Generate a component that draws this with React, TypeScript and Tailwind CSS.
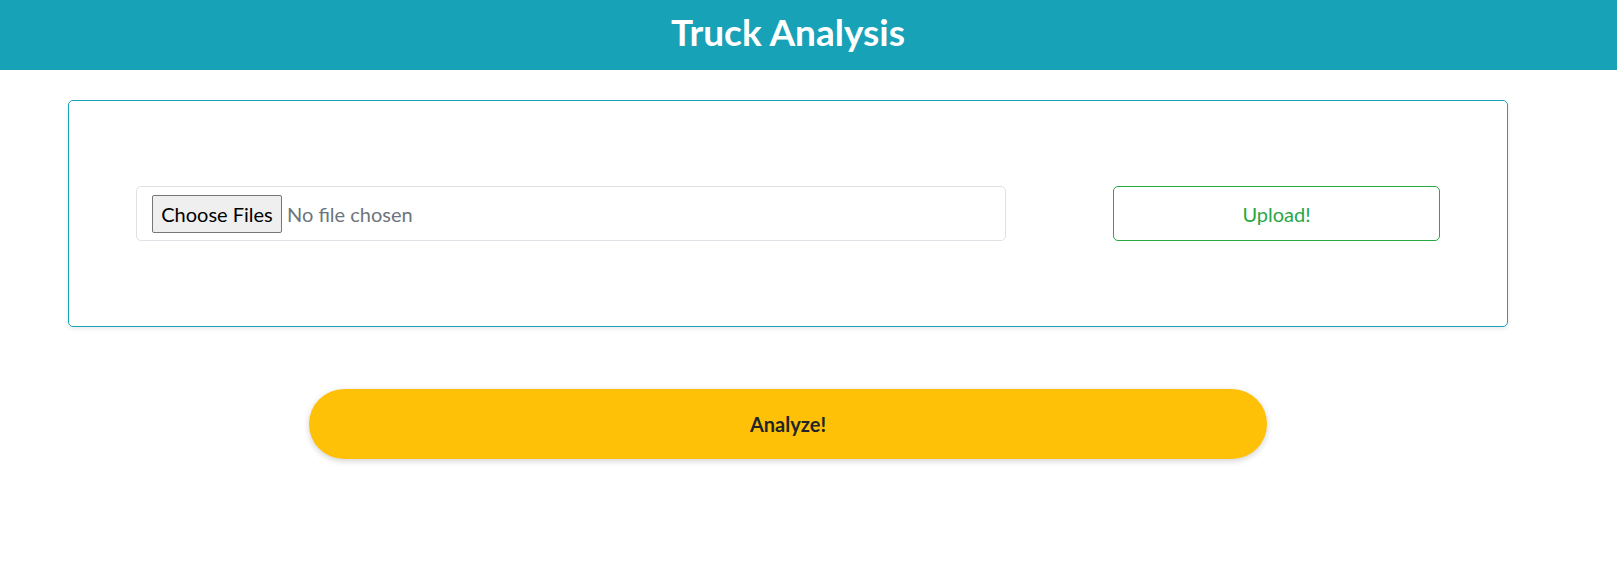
export default function App() {
  return (
    <div className="min-h-screen bg-white font-['Lato','Open_Sans',sans-serif] text-[#212529]">
      <header className="h-[70px] w-full bg-[#17a2b8]">
        <div className="flex h-full w-[1576px] items-center justify-center pb-[7px]">
          <h1 className="text-[37px] font-bold leading-none text-white">Truck Analysis</h1>
        </div>
      </header>

      <main className="w-[1576px] px-[68px] pt-[30px]">
        <div className="rounded-[5px] border border-[#17a2b8] px-[67px] py-[85px] shadow-[0_2px_4px_rgba(0,0,0,0.08)]">
          <div className="flex items-center justify-between">
            <label className="flex h-[55px] w-[870px] cursor-pointer items-center rounded-[5px] border border-[#dee2e6] pl-[15px]">
              <input type="file" multiple className="hidden" />
              <span className="flex h-[38px] w-[130px] items-center justify-center rounded-[2px] border border-[#767676] bg-[#efefef] text-[20px] text-black">
                Choose Files
              </span>
              <span className="ml-[5px] text-[20px] text-[#6c757d]">No file chosen</span>
            </label>
            <button className="h-[55px] w-[327px] rounded-[5px] border border-[#28a745] text-[20px] text-[#28a745]">
              Upload!
            </button>
          </div>
        </div>

        <div className="flex justify-center pt-[62px]">
          <button className="h-[70px] w-[958px] rounded-full bg-[#ffc107] text-[20px] font-bold text-[#212529] shadow-[0_2px_6px_rgba(0,0,0,0.18)]">
            Analyze!
          </button>
        </div>
      </main>
    </div>
  );
}
